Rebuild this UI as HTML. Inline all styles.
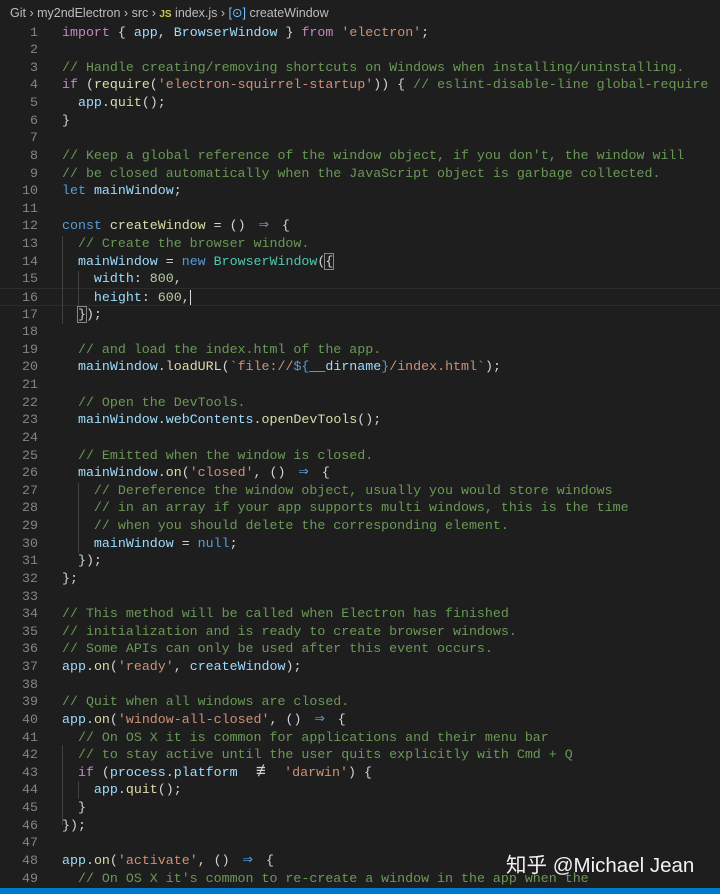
<!DOCTYPE html>
<html><head><meta charset="utf-8"><style>
html,body{margin:0;padding:0;background:#1e1e1e;width:720px;height:894px;overflow:hidden}
#bc{position:absolute;left:0;top:0;height:24px;width:720px;font:12.5px "Liberation Sans","DejaVu Sans",sans-serif;color:#bdbdbd;line-height:26px;padding-left:10px;box-sizing:border-box;white-space:nowrap}
#code{position:absolute;left:0;top:23.5px;width:720px;font:13.3px/17.625px "Liberation Mono","DejaVu Sans Mono",monospace;color:#d4d4d4}
.l{height:17.625px;position:relative;box-sizing:border-box}
.ln{position:absolute;left:0;width:38px;text-align:right;color:#858585}
.tx{position:absolute;left:62px;white-space:pre}
.k{color:#569cd6}.c{color:#c586c0}.v{color:#9cdcfe}.f{color:#dcdcaa}.s{color:#ce9178}.m{color:#6a9955}.t{color:#4ec9b0}.n{color:#b5cea8}
.a{display:inline-block;width:2ch;text-align:center;font-size:17px;line-height:10px}
.a3{display:inline-block;width:3ch;text-align:center;font-size:17px;line-height:10px}
.g{position:absolute;width:1px;background:#404040}
.cur{border-top:1px solid #2c2c2c;border-bottom:1px solid #2c2c2c}
#wm{position:absolute;left:506px;top:848px;font:20.5px "Liberation Sans","Noto Sans CJK SC",sans-serif;color:#f2f2f2}
#sb{position:absolute;left:0;top:888px;width:720px;height:6px;background:#007acc}
</style></head><body>
<div id="bc">Git › my2ndElectron › src › <span style="color:#cbcb41;font-weight:bold;font-size:10px">JS</span> index.js › <span style="color:#75beff">[⊙]</span> createWindow</div>
<div id="code"><div class="l"><span class="ln">1</span><span class="tx"><span class="c">import</span> { <span class="v">app</span>, <span class="v">BrowserWindow</span> } <span class="c">from</span> <span class="s">'electron'</span>;</span></div><div class="l"><span class="ln">2</span></div><div class="l"><span class="ln">3</span><span class="tx m">// Handle creating/removing shortcuts on Windows when installing/uninstalling.</span></div><div class="l"><span class="ln">4</span><span class="tx"><span class="c">if</span> (<span class="f">require</span>(<span class="s">'electron-squirrel-startup'</span>)) { <span class="m">// eslint-disable-line global-require</span></span></div><div class="l"><span class="ln">5</span><span class="tx">  <span class="v">app</span>.<span class="f">quit</span>();</span></div><div class="l"><span class="ln">6</span><span class="tx">}</span></div><div class="l"><span class="ln">7</span></div><div class="l"><span class="ln">8</span><span class="tx m">// Keep a global reference of the window object, if you don't, the window will</span></div><div class="l"><span class="ln">9</span><span class="tx m">// be closed automatically when the JavaScript object is garbage collected.</span></div><div class="l"><span class="ln">10</span><span class="tx"><span class="k">let</span> <span class="v">mainWindow</span>;</span></div><div class="l"><span class="ln">11</span></div><div class="l"><span class="ln">12</span><span class="tx"><span class="k">const</span> <span class="f">createWindow</span> = () <span class="a k">⇒</span> {</span></div><div class="l"><span class="ln">13</span><span class="tx">  <span class="m">// Create the browser window.</span></span></div><div class="l"><span class="ln">14</span><span class="tx">  <span class="v">mainWindow</span> = <span class="k">new</span> <span class="t">BrowserWindow</span>(<span style="outline:1px solid #888">{</span></span></div><div class="l"><span class="ln">15</span><span class="tx">    <span class="v">width</span>: <span class="n">800</span>,</span></div><div class="l cur"><span class="ln">16</span><span class="tx">    <span class="v">height</span>: <span class="n">600</span>,<span style="border-left:1px solid #ddd"></span></span></div><div class="l"><span class="ln">17</span><span class="tx">  <span style="outline:1px solid #888">}</span>);</span></div><div class="l"><span class="ln">18</span></div><div class="l"><span class="ln">19</span><span class="tx">  <span class="m">// and load the index.html of the app.</span></span></div><div class="l"><span class="ln">20</span><span class="tx">  <span class="v">mainWindow</span>.<span class="f">loadURL</span>(<span class="s">`file://</span><span class="k">${</span><span class="v">__dirname</span><span class="k">}</span><span class="s">/index.html`</span>);</span></div><div class="l"><span class="ln">21</span></div><div class="l"><span class="ln">22</span><span class="tx">  <span class="m">// Open the DevTools.</span></span></div><div class="l"><span class="ln">23</span><span class="tx">  <span class="v">mainWindow</span>.<span class="v">webContents</span>.<span class="f">openDevTools</span>();</span></div><div class="l"><span class="ln">24</span></div><div class="l"><span class="ln">25</span><span class="tx">  <span class="m">// Emitted when the window is closed.</span></span></div><div class="l"><span class="ln">26</span><span class="tx">  <span class="v">mainWindow</span>.<span class="f">on</span>(<span class="s">'closed'</span>, () <span class="a k">⇒</span> {</span></div><div class="l"><span class="ln">27</span><span class="tx">    <span class="m">// Dereference the window object, usually you would store windows</span></span></div><div class="l"><span class="ln">28</span><span class="tx">    <span class="m">// in an array if your app supports multi windows, this is the time</span></span></div><div class="l"><span class="ln">29</span><span class="tx">    <span class="m">// when you should delete the corresponding element.</span></span></div><div class="l"><span class="ln">30</span><span class="tx">    <span class="v">mainWindow</span> = <span class="k">null</span>;</span></div><div class="l"><span class="ln">31</span><span class="tx">  });</span></div><div class="l"><span class="ln">32</span><span class="tx">};</span></div><div class="l"><span class="ln">33</span></div><div class="l"><span class="ln">34</span><span class="tx m">// This method will be called when Electron has finished</span></div><div class="l"><span class="ln">35</span><span class="tx m">// initialization and is ready to create browser windows.</span></div><div class="l"><span class="ln">36</span><span class="tx m">// Some APIs can only be used after this event occurs.</span></div><div class="l"><span class="ln">37</span><span class="tx"><span class="v">app</span>.<span class="f">on</span>(<span class="s">'ready'</span>, <span class="v">createWindow</span>);</span></div><div class="l"><span class="ln">38</span></div><div class="l"><span class="ln">39</span><span class="tx m">// Quit when all windows are closed.</span></div><div class="l"><span class="ln">40</span><span class="tx"><span class="v">app</span>.<span class="f">on</span>(<span class="s">'window-all-closed'</span>, () <span class="a k">⇒</span> {</span></div><div class="l"><span class="ln">41</span><span class="tx">  <span class="m">// On OS X it is common for applications and their menu bar</span></span></div><div class="l"><span class="ln">42</span><span class="tx">  <span class="m">// to stay active until the user quits explicitly with Cmd + Q</span></span></div><div class="l"><span class="ln">43</span><span class="tx">  <span class="c">if</span> (<span class="v">process</span>.<span class="v">platform</span> <span class="a3">≢</span> <span class="s">'darwin'</span>) {</span></div><div class="l"><span class="ln">44</span><span class="tx">    <span class="v">app</span>.<span class="f">quit</span>();</span></div><div class="l"><span class="ln">45</span><span class="tx">  }</span></div><div class="l"><span class="ln">46</span><span class="tx">});</span></div><div class="l"><span class="ln">47</span></div><div class="l"><span class="ln">48</span><span class="tx"><span class="v">app</span>.<span class="f">on</span>(<span class="s">'activate'</span>, () <span class="a k">⇒</span> {</span></div><div class="l"><span class="ln">49</span><span class="tx">  <span class="m">// On OS X it's common to re-create a window in the app when the</span></span></div></div>
<div class="g" style="left:62px;top:236px;height:88px"></div>
<div class="g" style="left:78px;top:271px;height:35px"></div>
<div class="g" style="left:78px;top:483px;height:70px"></div>
<div class="g" style="left:62px;top:745px;height:80px"></div>
<div class="g" style="left:78px;top:781px;height:18px"></div>
<div id="wm">知乎 @Michael Jean</div>
<div id="sb"></div>
</body></html>
